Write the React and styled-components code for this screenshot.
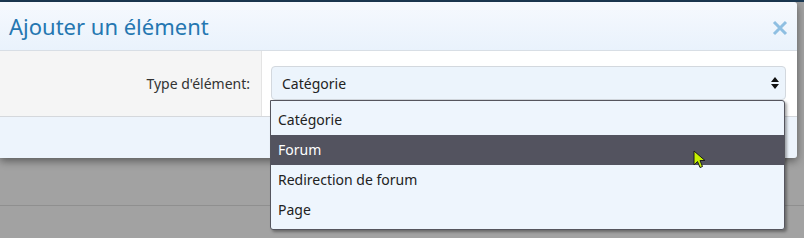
import styled, { createGlobalStyle } from "styled-components";

const GlobalStyle = createGlobalStyle`
  html, body {
    margin: 0;
    padding: 0;
  }
  body {
    font-family: "Noto Sans", "Open Sans", sans-serif;
    color: #222;
  }
`;

const Page = styled.div`
  position: relative;
  height: 238px;
  overflow: hidden;
  padding-top: 2px;
  box-sizing: border-box;
  background: linear-gradient(
    to bottom,
    #1c3a55 0 2px,
    #a2a2a2 2px 205px,
    #8f8f8f 205px 206px,
    #a2a2a2 206px
  );
`;

const Modal = styled.div`
  width: 797px;
  border-radius: 0 3px 3px 0;
  box-shadow: 0 3px 8px rgba(0, 0, 0, 0.45);
`;

const Header = styled.div`
  display: flex;
  align-items: center;
  justify-content: space-between;
  height: 48px;
  padding: 0 9px 0 9px;
  background: linear-gradient(to bottom, #f6f9fe, #e9f2fc);
  border-bottom: 1px solid #d8dee5;
  border-radius: 0 3px 0 0;
`;

const Title = styled.h2`
  margin: 0;
  font-weight: 400;
  font-size: 22px;
  color: #2577b1;
`;

const Close = styled.span`
  display: flex;
  width: 16px;
  height: 16px;
  margin-top: 4px;
`;

const Row = styled.div`
  display: grid;
  grid-template-columns: 262px 1fr;
  background: #fff;
`;

const LabelCell = styled.div`
  display: flex;
  align-items: center;
  justify-content: flex-end;
  padding-right: 11px;
  background: #f5f5f5;
  border-right: 1px solid #e4e4e4;
  font-size: 14px;
  color: #333;
`;

const FieldCell = styled.div`
  padding: 15px 11px 16px 9px;
`;

const SelectBox = styled.div`
  position: relative;
  display: flex;
  align-items: center;
  justify-content: space-between;
  height: 32px;
  padding: 0 6px 0 10px;
  background: #ecf4fc;
  border: 1px solid #d3d8de;
  border-radius: 4px;
  font-size: 14px;
  color: #222;
`;

const List = styled.ul`
  position: absolute;
  top: calc(100% + 1px);
  left: -2px;
  width: 513px;
  margin: 0;
  padding: 4px 0;
  list-style: none;
  background: #eef5fd;
  border: 1px solid #55555e;
  border-radius: 0 3px 3px 3px;
  box-shadow: 2px 2px 3px rgba(0, 0, 0, 0.35);
  z-index: 2;
`;

const Item = styled.li`
  height: 30px;
  line-height: 30px;
  padding-left: 7px;
  font-size: 14px;
  color: ${({ active }) => (active ? "#fff" : "#222")};
  background: ${({ active }) => (active ? "#53535f" : "transparent")};
`;

const Footer = styled.div`
  height: 41px;
  background: #edf4fc;
  border-top: 1px solid #d5d8dc;
  border-radius: 0 0 3px 0;
`;

const Pointer = styled.svg`
  position: absolute;
  left: 693px;
  top: 150px;
  z-index: 3;
`;

const options = ["Catégorie", "Forum", "Redirection de forum", "Page"];

const App = () => {
  return (
    <Page>
      <GlobalStyle />
      <Modal>
        <Header>
          <Title>Ajouter un élément</Title>
          <Close>
            <svg width="16" height="16" viewBox="0 0 16 16">
              <path
                d="M2 2 L14 14 M14 2 L2 14"
                stroke="#8fbfe2"
                strokeWidth="3"
                fill="none"
              />
            </svg>
          </Close>
        </Header>
        <Row>
          <LabelCell>Type d'élément:</LabelCell>
          <FieldCell>
            <SelectBox>
              <span>Catégorie</span>
              <svg width="8" height="12" viewBox="0 0 8 12">
                <path d="M4 0 L8 5 L0 5 Z M0 7 L8 7 L4 12 Z" fill="#111" />
              </svg>
              <List>
                {options.map((opt) => (
                  <Item key={opt} active={opt === "Forum"}>
                    {opt}
                  </Item>
                ))}
              </List>
            </SelectBox>
          </FieldCell>
        </Row>
        <Footer />
      </Modal>
      <Pointer width="14" height="20" viewBox="0 0 14 20">
        <path
          d="M1 1 L1 15 L4.5 11.5 L7 17.5 L9.5 16.5 L7 10.5 L12 10.5 Z"
          fill="#c6f000"
          stroke="#1a1a1a"
          strokeWidth="1"
          strokeLinejoin="round"
        />
      </Pointer>
    </Page>
  );
};

export default App;
